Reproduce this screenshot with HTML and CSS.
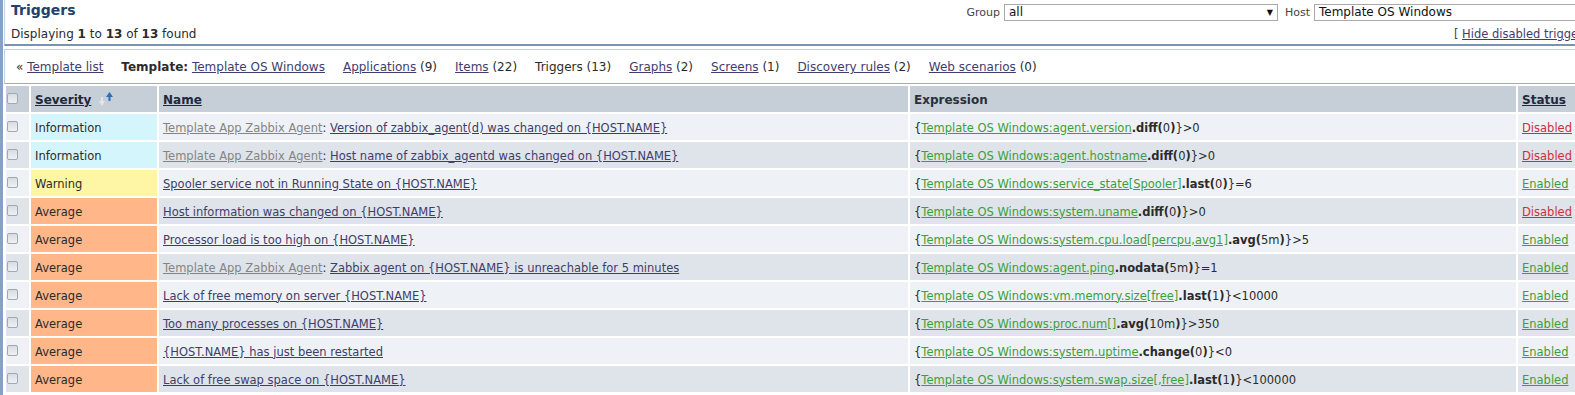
FILE: index.html
```html
<!DOCTYPE html>
<html lang="en">
<head>
    <meta charset="UTF-8">
    <title>Configuration of triggers</title>
    <link rel="stylesheet" href="styles.css">
</head>
<body>
<div class="page">
    <!-- Page header -->
    <div class="header-box">
        <div class="header-left">
            <div class="title">Triggers</div>
            <div class="paging">Displaying <b>1</b> to <b>13</b> of <b>13</b> found</div>
        </div>
        <div class="header-right">
            <div class="filters">
                <span class="label">Group</span>
                <span class="select group-select"><span>all</span><span class="arrow">&#9660;</span></span>
                <span class="label">Host</span>
                <span class="select host-select"><span>Template OS Windows</span></span>
            </div>
            <div class="hide-link">[ <a href="#">Hide disabled triggers</a> ]</div>
        </div>
    </div>

    <!-- Template navigation -->
    <div class="nav-box">
        <span class="nav-item">&laquo; <a href="#">Template list</a></span>
        <span class="nav-item"><b>Template:</b> <a href="#">Template OS Windows</a></span>
        <span class="nav-item"><a href="#">Applications</a> (9)</span>
        <span class="nav-item"><a href="#">Items</a> (22)</span>
        <span class="nav-item">Triggers (13)</span>
        <span class="nav-item"><a href="#">Graphs</a> (2)</span>
        <span class="nav-item"><a href="#">Screens</a> (1)</span>
        <span class="nav-item"><a href="#">Discovery rules</a> (2)</span>
        <span class="nav-item"><a href="#">Web scenarios</a> (0)</span>
    </div>

    <!-- Trigger list -->
    <table class="list">
        <thead>
            <tr>
                <th class="col-check"><span class="check"></span></th>
                <th class="col-sev"><a href="#">Severity</a>
                    <svg class="sort" width="15" height="15" viewBox="0 0 15 15">
                        <path d="M2 5 h2 v4 h2 l-3 5 l-3 -5 h2 z" fill="#e2e6ea"/>
                        <path d="M10.5 0 l3.5 5 h-2.5 v4 h-2 v-4 h-2.5 z" fill="#2f6db4"/>
                    </svg>
                </th>
                <th class="col-name"><a href="#">Name</a></th>
                <th class="col-expr">Expression</th>
                <th class="col-status"><a href="#">Status</a></th>
            </tr>
        </thead>
        <tbody>
            <tr class="odd">
                <td><span class="check"></span></td>
                <td class="sev-info">Information</td>
                <td><a class="grey" href="#">Template App Zabbix Agent</a>: <a href="#">Version of zabbix_agent(d) was changed on {HOST.NAME}</a></td>
                <td>{<a class="green" href="#">Template OS Windows:agent.version</a><b>.diff(</b>0<b>)</b>}&gt;0</td>
                <td><a class="red" href="#">Disabled</a></td>
            </tr>
            <tr class="even">
                <td><span class="check"></span></td>
                <td class="sev-info">Information</td>
                <td><a class="grey" href="#">Template App Zabbix Agent</a>: <a href="#">Host name of zabbix_agentd was changed on {HOST.NAME}</a></td>
                <td>{<a class="green" href="#">Template OS Windows:agent.hostname</a><b>.diff(</b>0<b>)</b>}&gt;0</td>
                <td><a class="red" href="#">Disabled</a></td>
            </tr>
            <tr class="odd">
                <td><span class="check"></span></td>
                <td class="sev-warn">Warning</td>
                <td><a href="#">Spooler service not in Running State on {HOST.NAME}</a></td>
                <td>{<a class="green" href="#">Template OS Windows:service_state[Spooler]</a><b>.last(</b>0<b>)</b>}=6</td>
                <td><a class="green" href="#">Enabled</a></td>
            </tr>
            <tr class="even">
                <td><span class="check"></span></td>
                <td class="sev-avg">Average</td>
                <td><a href="#">Host information was changed on {HOST.NAME}</a></td>
                <td>{<a class="green" href="#">Template OS Windows:system.uname</a><b>.diff(</b>0<b>)</b>}&gt;0</td>
                <td><a class="red" href="#">Disabled</a></td>
            </tr>
            <tr class="odd">
                <td><span class="check"></span></td>
                <td class="sev-avg">Average</td>
                <td><a href="#">Processor load is too high on {HOST.NAME}</a></td>
                <td>{<a class="green" href="#">Template OS Windows:system.cpu.load[percpu,avg1]</a><b>.avg(</b>5m<b>)</b>}&gt;5</td>
                <td><a class="green" href="#">Enabled</a></td>
            </tr>
            <tr class="even">
                <td><span class="check"></span></td>
                <td class="sev-avg">Average</td>
                <td><a class="grey" href="#">Template App Zabbix Agent</a>: <a href="#">Zabbix agent on {HOST.NAME} is unreachable for 5 minutes</a></td>
                <td>{<a class="green" href="#">Template OS Windows:agent.ping</a><b>.nodata(</b>5m<b>)</b>}=1</td>
                <td><a class="green" href="#">Enabled</a></td>
            </tr>
            <tr class="odd">
                <td><span class="check"></span></td>
                <td class="sev-avg">Average</td>
                <td><a href="#">Lack of free memory on server {HOST.NAME}</a></td>
                <td>{<a class="green" href="#">Template OS Windows:vm.memory.size[free]</a><b>.last(</b>1<b>)</b>}&lt;10000</td>
                <td><a class="green" href="#">Enabled</a></td>
            </tr>
            <tr class="even">
                <td><span class="check"></span></td>
                <td class="sev-avg">Average</td>
                <td><a href="#">Too many processes on {HOST.NAME}</a></td>
                <td>{<a class="green" href="#">Template OS Windows:proc.num[]</a><b>.avg(</b>10m<b>)</b>}&gt;350</td>
                <td><a class="green" href="#">Enabled</a></td>
            </tr>
            <tr class="odd">
                <td><span class="check"></span></td>
                <td class="sev-avg">Average</td>
                <td><a href="#">{HOST.NAME} has just been restarted</a></td>
                <td>{<a class="green" href="#">Template OS Windows:system.uptime</a><b>.change(</b>0<b>)</b>}&lt;0</td>
                <td><a class="green" href="#">Enabled</a></td>
            </tr>
            <tr class="even">
                <td><span class="check"></span></td>
                <td class="sev-avg">Average</td>
                <td><a href="#">Lack of free swap space on {HOST.NAME}</a></td>
                <td>{<a class="green" href="#">Template OS Windows:system.swap.size[,free]</a><b>.last(</b>1<b>)</b>}&lt;100000</td>
                <td><a class="green" href="#">Enabled</a></td>
            </tr>
        </tbody>
    </table>
</div>
</body>
</html>
```

FILE: styles.css
```css
/* General */
html, body {
    margin: 0;
    overflow: hidden;
    background: #fff;
}

body {
    font-family: "DejaVu Sans", Verdana, sans-serif;
    font-size: 12px;
    color: #2b2b2b;
}

a {
    color: #3f3d6c;
    text-decoration: underline;
}

a.grey {
    color: #848484;
}

a.green {
    color: #3c9f3c;
}

a.red {
    color: #cf2f3a;
}

.page {
    width: 1625px;
    min-height: 395px;
    border-left: 3px solid #86a1c5;
    padding-left: 1px;
}

/* Header */
.header-box {
    display: flex;
    justify-content: space-between;
    height: 44px;
    border-left: 1px solid #c5d0dc;
    border-bottom: 2px solid #7b93b0;
    padding: 0 32px 0 6px;
}

.title {
    font-size: 14px;
    font-weight: bold;
    color: #23416a;
    padding-top: 2px;
    height: 22px;
}

.paging {
    padding-top: 3px;
}

.header-right {
    display: flex;
    flex-direction: column;
    align-items: flex-end;
}

.filters {
    display: flex;
    align-items: center;
    gap: 4px;
    padding-top: 2px;
    height: 20px;
}

.label {
    font-size: 11px;
    color: #444;
    margin-left: 3px;
}

.select {
    display: flex;
    justify-content: space-between;
    align-items: center;
    height: 15px;
    border: 1px solid #a9a9a9;
    padding: 0 4px;
    color: #111;
}

.group-select {
    width: 264px;
}

.host-select {
    width: 273px;
}

.arrow {
    font-size: 8px;
}

.hide-link {
    padding-top: 5px;
    font-size: 11.5px;
    color: #444;
}

/* Template navigation */
.nav-box {
    margin-top: 3px;
    height: 32px;
    display: flex;
    align-items: center;
    gap: 18px;
    padding-left: 11px;
    padding-top: 1px;
    border: 1px solid #c5d0dc;
    border-bottom: 1px solid #a3adb8;
    border-right: none;
}

/* Trigger list */
.list {
    width: 1620px;
    margin-top: 0;
    border-collapse: separate;
    border-spacing: 2px;
    table-layout: fixed;
    font-size: 11.5px;
}

.list th,
.list td {
    height: 25px;
    padding: 1px 4px 0;
    text-align: left;
    white-space: nowrap;
    overflow: hidden;
}

.list th {
    font-size: 12px;
    background: #c6cfd8;
    font-weight: bold;
    color: #2a2f3a;
}

.list th a {
    color: #23283a;
}

.col-check { width: 21px; }
.col-sev { width: 118px; }
.col-name { width: 741px; }
.col-expr { width: 598px; }

.list .col-check,
.list td:first-child {
    padding: 0 1px;
    vertical-align: top;
}

.sort {
    vertical-align: -3px;
    margin-left: 3px;
}

.odd td {
    background: #eef1f5;
}

.even td {
    background: #dfe4ea;
}

.list td.sev-info { background: #d5f5fd; }
.list td.sev-warn { background: #fff6a5; }
.list td.sev-avg { background: #ffb689; }

.check {
    display: block;
    width: 9px;
    height: 9px;
    margin-top: 7px;
    border: 1px solid #a0a8b0;
    border-radius: 2px;
    background: linear-gradient(#d8dce1, #eff1f3);
}
```
